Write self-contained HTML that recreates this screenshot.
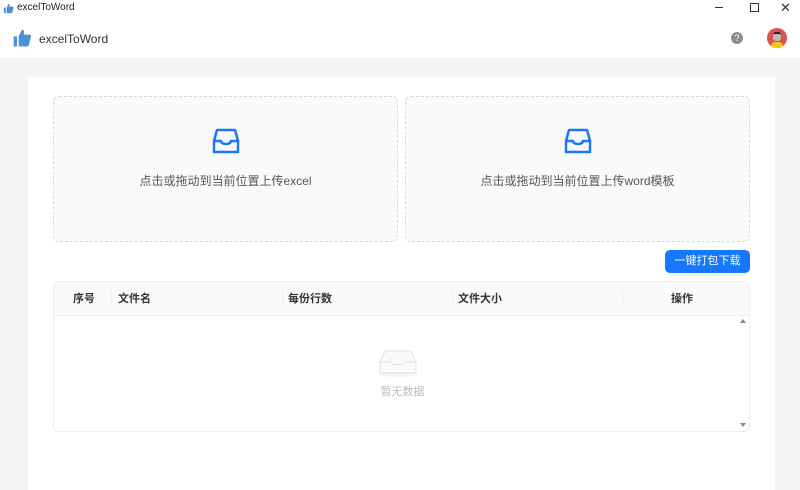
<!DOCTYPE html>
<html><head><meta charset="utf-8"><style>
*{margin:0;padding:0;box-sizing:border-box}
html,body{width:800px;height:490px;overflow:hidden}
body{background:#f5f5f5;font-family:"Liberation Sans","Noto Sans CJK SC",sans-serif;position:relative;color:#333}
.abs{position:absolute}
.tb{left:0;top:0;width:800px;height:17px;background:#fff;font-size:10px}
.hd{left:0;top:17px;width:800px;height:42px;background:#fff;border-bottom:1px solid #eee}
.card{left:28px;top:77px;width:747px;height:420px;background:#fff}
.up{width:345px;height:146px;top:96px;border:1px dashed #d9d9d9;border-radius:6px;background:#fafafa;text-align:center;font-size:12px;color:#555}
.up svg{margin-top:30px}
.up div{margin-top:14px}
.btn{left:665px;top:250px;width:85px;height:23px;background:#1677ff;border-radius:5px;color:#fff;font-size:11px;text-align:center;line-height:23px}
.tbl{left:53px;top:281px;width:697px;height:151px;border:1px solid #eee;border-radius:6px;overflow:hidden}
.th{height:34px;background:#fafafa;border-bottom:1px solid #eee;position:relative;font-size:11px;font-weight:bold;color:#333}
.th span{position:absolute;top:8px}
.th i{position:absolute;top:9px;width:1px;height:16px;background:#eee}
</style></head><body>
<div class="abs tb">
<svg class="abs" style="left:3px;top:3px" width="11" height="11" viewBox="0 0 12 12"><path d="M1 5h2v6H1z M4 5l2-4c1 0 1.5 1 1 3h3.5c.8 0 1 .8.8 1.4L10 10.5c-.2.4-.5.5-1 .5H4z" fill="#4a8fd8"/></svg>
<span class="abs" style="left:17px;top:2px;color:#222">excelToWord</span>
<span class="abs" style="left:715px;top:7px;width:8px;height:1px;background:#333"></span>
<span class="abs" style="left:750px;top:3px;width:9px;height:9px;border:1px solid #333"></span>
<span class="abs" style="left:780px;top:0px;font-size:13px;color:#333">✕</span>
</div>
<div class="abs hd">
<svg class="abs" style="left:12px;top:11px" width="20" height="20" viewBox="0 0 12 12"><path d="M1 5h2v6H1z M4 5l2-4c1 0 1.5 1 1 3h3.5c.8 0 1 .8.8 1.4L10 10.5c-.2.4-.5.5-1 .5H4z" fill="#4a8fd8"/></svg>
<span class="abs" style="left:39px;top:15px;font-size:12px;color:#333">excelToWord</span>
<span class="abs" style="left:731px;top:15px;width:12px;height:12px;border-radius:50%;background:#8c8c8c;color:#fff;font-size:9px;text-align:center;line-height:12px">?</span>
<span class="abs" style="left:767px;top:11px;width:20px;height:20px;border-radius:50%;background:#d9534f;overflow:hidden"><span class="abs" style="left:6px;top:4px;width:8px;height:9px;background:#bbb;border-radius:3px;border-top:2px solid #222"></span><span class="abs" style="left:4px;top:14px;width:12px;height:8px;background:#f5c518;border-radius:4px 4px 0 0"></span></span>
</div>
<div class="abs card"></div>
<div class="abs up" style="left:53px"><svg width="30" height="28" viewBox="0 0 30 28"><path d="M3 14 L6 3 H24 L27 14 V25 H3 Z M3 14 H10 C10 18 20 18 20 14 H27" fill="none" stroke="#1677ff" stroke-width="2.5" stroke-linejoin="round"/></svg><div>点击或拖动到当前位置上传excel</div></div>
<div class="abs up" style="left:405px"><svg width="30" height="28" viewBox="0 0 30 28"><path d="M3 14 L6 3 H24 L27 14 V25 H3 Z M3 14 H10 C10 18 20 18 20 14 H27" fill="none" stroke="#1677ff" stroke-width="2.5" stroke-linejoin="round"/></svg><div>点击或拖动到当前位置上传word模板</div></div>
<div class="abs btn">一键打包下载</div>
<div class="abs tbl">
<div class="th"><span style="left:19px">序号</span><i style="left:57px"></i><span style="left:64px">文件名</span><i style="left:228px"></i><span style="left:234px">每份行数</span><i style="left:398px"></i><span style="left:404px">文件大小</span><i style="left:568px"></i><span style="left:617px">操作</span></div>
<svg class="abs" style="left:322px;top:66px" width="44" height="30" viewBox="0 0 44 30"><ellipse cx="22" cy="26" rx="20" ry="3" fill="#f5f5f5"/><path d="M4 14 L9 3 H35 L40 14 V25 H4 Z" fill="#fafafa" stroke="#e0e0e0"/><path d="M4 14 H15 C15 18 29 18 29 14 H40" fill="none" stroke="#e0e0e0"/></svg>
<div class="abs" style="left:0;width:697px;top:101px;text-align:center;font-size:11px;color:#bbb">暂无数据</div>
<span class="abs" style="left:686px;top:37px;border:3px solid transparent;border-bottom:4px solid #888;border-top:0"></span>
<span class="abs" style="left:686px;top:141px;border:3px solid transparent;border-top:4px solid #888;border-bottom:0"></span>
</div>
</body></html>
